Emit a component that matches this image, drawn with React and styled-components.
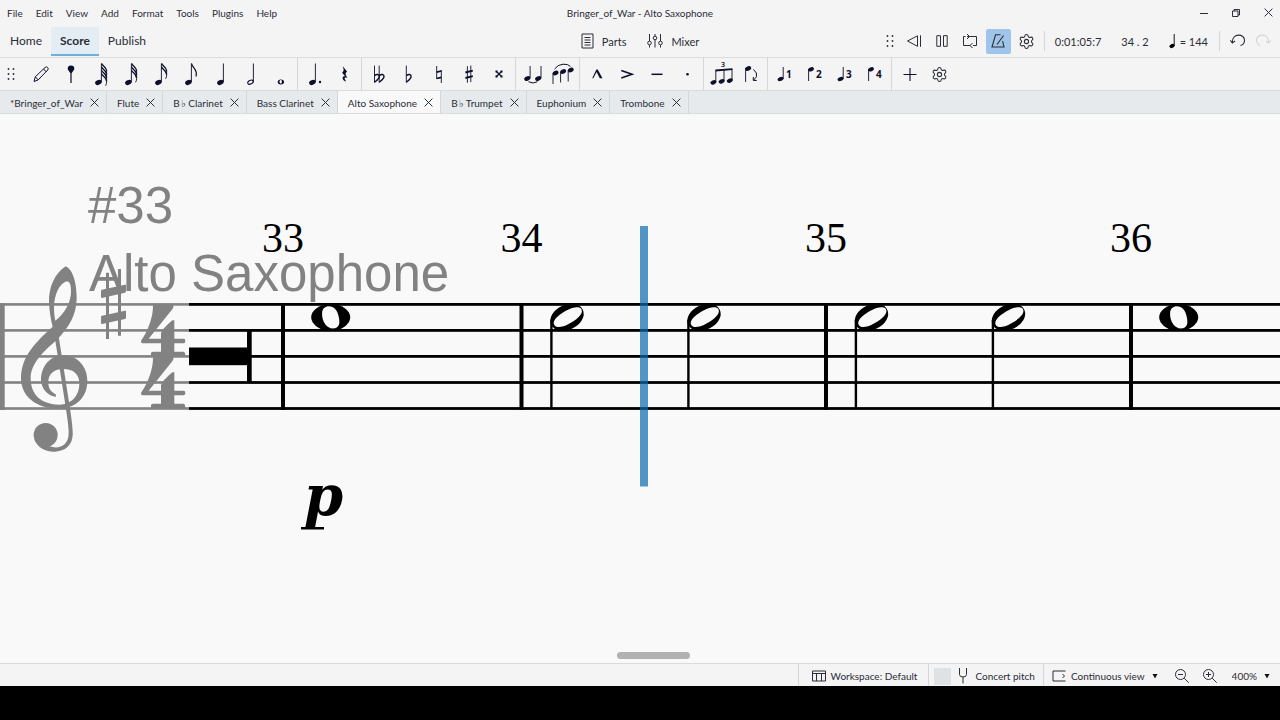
import React from 'react';
import styled, { createGlobalStyle } from 'styled-components';
import { Settings } from 'lucide-react';

const GlobalStyle = createGlobalStyle`
  * {
    box-sizing: border-box;
  }

  body {
    margin: 0;
    background: #000;
    color: #2b2d38;
    font-family: Lato, "Noto Sans", "DejaVu Sans", sans-serif;
    font-size: 10px;
  }

  button, select, input {
    margin: 0;
    padding: 0;
    border: none;
    background: none;
    color: inherit;
    font: inherit;
  }

  svg {
    display: block;
    flex-shrink: 0;
  }
`

const Window = styled.div`
  display: flex;
  flex-direction: column;
  min-height: 100vh;
  padding-bottom: 34px;
`

// ---------------- Title bar ----------------

const TitleBar = styled.header`
  display: grid;
  grid-template-columns: 1fr auto 1fr;
  align-items: center;
  height: 27px;
  padding-bottom: 2px;
  background: #f4f4f4;
`

const MenuBar = styled.nav`
  display: flex;
  gap: 1px;
  padding-left: 1px;
`

const MenuButton = styled.button`
  padding: 0 6px;
  line-height: 16px;
`

const Title = styled.div`
  line-height: 16px;
`

const WindowButtons = styled.div`
  display: flex;
  justify-content: flex-end;
  gap: 8px;
`

const WindowButton = styled.button`
  display: flex;
  align-items: center;
  justify-content: center;
  width: 24px;
  height: 24px;
`

// ---------------- Main toolbar ----------------

const MainToolbar = styled.div`
  display: grid;
  grid-template-columns: 1fr auto 1fr;
  height: 31px;
  background: #f4f4f4;
  border-bottom: 1px solid #d9dcdd;
`

const PageTabs = styled.nav`
  display: flex;
  height: 29px;
  padding-left: 1px;
`

const PageTab = styled.button`
  padding: 0 9px;
  font-size: 12px;
  font-weight: ${({ $active }) => ($active ? 700 : 400)};
  background: ${({ $active }) => ($active ? '#e4edf3' : 'transparent')};
  border-bottom: 2px solid ${({ $active }) => ($active ? '#70aedb' : 'transparent')};
`

const CenterTools = styled.div`
  display: flex;
  align-items: center;
  gap: 21px;
  height: 28px;
`

const LabelButton = styled.button`
  display: flex;
  align-items: center;
  gap: 8px;
  font-size: 11px;
`

const Playback = styled.div`
  display: flex;
  align-items: center;
  justify-content: flex-end;
  height: 28px;
  padding-right: 5px;
`

const PlayButtons = styled.div`
  display: flex;
  align-items: center;
  gap: 3px;
`

const IconButton = styled.button`
  display: flex;
  align-items: center;
  justify-content: center;
  width: 25px;
  height: 25px;
  border-radius: 2px;
  background: ${({ $on }) => ($on ? '#9fc6ea' : 'transparent')};
  opacity: ${({ disabled }) => (disabled ? 0.15 : 1)};
`

const PlaySeparator = styled.div`
  width: 1px;
  height: 20px;
  margin: 0 5px;
  background: #d4d7d8;
`

const Readout = styled.div`
  display: flex;
  align-items: center;
  gap: 20px;
  padding: 0 6px 0 5px;
  font-size: 11px;
`

const Tempo = styled.span`
  display: flex;
  align-items: center;
  gap: 4px;
`

// ---------------- Note input toolbar ----------------

const NoteToolbar = styled.div`
  display: flex;
  align-items: center;
  height: 33px;
  background: #f4f4f4;
  border-bottom: 1px solid #d9dcdd;
`

const GripButton = styled.button`
  display: flex;
  align-items: center;
  justify-content: center;
  width: ${({ $narrow }) => ($narrow ? '16px' : '22px')};
  margin-right: 4px;
`

const NoteGroup = styled.div`
  display: flex;
  height: 100%;

  & + & {
    padding-left: 2px;
    margin-left: 1px;
    border-left: 1px solid #d4d7d8;
  }
`

const NoteButton = styled.button`
  display: flex;
  align-items: center;
  justify-content: center;
  width: 30px;
  height: 32px;
`

// ---------------- Part tabs ----------------

const PartTabs = styled.div`
  display: flex;
  height: 23px;
  background: #e6eaec;
  border-bottom: 1px solid #d9dcdd;
`

const PartTab = styled.div`
  display: flex;
  align-items: center;
  gap: 7px;
  padding: 1px 7px 0 10px;
  border-right: 1px solid #d3d8da;
  background: ${({ $active }) => ($active ? '#f9f9f9' : 'transparent')};
`

// ---------------- Score ----------------

const Canvas = styled.main`
  display: flex;
  flex: 1;
  flex-direction: column;
  background: #f9f9f9;
`

const ScoreSvg = styled.svg`
  flex: 1;
  width: 100%;
  min-height: 530px;
`

const ScrollTrack = styled.div`
  height: 11px;
`

const ScrollThumb = styled.div`
  width: 73px;
  height: 7px;
  margin-left: 48.2%;
  border-radius: 4px;
  background: #b1b1b1;
`

// ---------------- Status bar ----------------

const StatusBar = styled.footer`
  display: flex;
  justify-content: flex-end;
  height: 23px;
  background: #f4f4f4;
  border-top: 1px solid #d9dcdd;
`

const StatusGroup = styled.div`
  display: flex;
  align-items: center;
  padding: 2px ${({ $right }) => $right || '8px'} 0 ${({ $left }) => $left || '8px'};
  border-left: 1px solid #d4d7d8;
`

const StatusButton = styled.button`
  display: flex;
  align-items: center;
  gap: 5px;
`

const StatusLabel = styled.label`
  display: flex;
  align-items: center;
  gap: 5px;
`

const CheckBox = styled.input`
  appearance: none;
  width: 17px;
  height: 17px;
  background: #dfe2e4;
`

const StatusSelect = styled.select`
  appearance: none;
  field-sizing: content;
`

const ZoomButtons = styled.div`
  display: flex;
  margin: 0 8px;
`

const ZoomButton = styled.button`
  display: flex;
  align-items: center;
  justify-content: center;
  width: 28px;
  height: 20px;
`

// ---------------- Icon drawings ----------------

const Line = ({ children, w = 16, h = 16, sw = 1 }) => (
  <svg width={w} height={h} viewBox={`0 0 ${w} ${h}`} fill="none" stroke="#2b2d38" strokeWidth={sw}>
    {children}
  </svg>
)

const Grip = () => (
  <svg width="8" height="14" viewBox="0 0 8 14" fill="#2b2d38">
    {[2, 7, 12].map((y) => (
      <g key={y}>
        <circle cx="1.5" cy={y} r=".9" />
        <circle cx="6.5" cy={y} r=".9" />
      </g>
    ))}
  </svg>
)

const CloseX = ({ size = 9 }) => (
  <Line w={size} h={size}>
    <path d={`M.6 .6L${size - 0.6} ${size - 0.6}M${size - 0.6} .6L.6 ${size - 0.6}`} />
  </Line>
)

const Arrow = () => (
  <svg width="10" height="6" viewBox="0 0 10 6">
    <path d="M2.5 1h5L5 5.6z" fill="#111" />
  </svg>
)

const Head = ({ x, y, rx = 3.4, ry = 2.4 }) => (
  <ellipse cx={x} cy={y} rx={rx} ry={ry} transform={`rotate(-24 ${x} ${y})`} stroke="none" />
)

const Stem = ({ x, y1, y2 }) => <path d={`M${x} ${y1}V${y2}`} fill="none" strokeWidth=".9" />

const Flagged = ({ flags }) => {
  const starts = Array.from({ length: flags }, (_, i) => 5.5 + i * 3.4)
  return (
    <>
      <Head x={12.4} y={24.4} />
      <Stem x={15.4} y1={5.5} y2={24} />
      {starts.map((y) => (
        <path
          key={y}
          fill="none"
          strokeWidth={flags > 1 ? 1.4 : 1.2}
          d={flags > 1 ? `M15.6 ${y}c.6 2.6 4.7 3 5 7.6` : `M15.6 ${y}c.6 4.6 6.6 6 4.4 13`}
        />
      ))}
      {flags > 1 && <path fill="none" strokeWidth=".9" d={`M20.6 ${starts[0] + 7}V${starts[flags - 1] + 8}q.2 2-1 4`} />}
    </>
  )
}

const Flat = ({ x }) => (
  <>
    <Stem x={x} y1={7.6} y2={24.6} />
    <path fill="none" strokeWidth="1.4" d={`M${x} 17.8c2.2-2 5-1.6 4.8.8c-.2 2.2-2.8 4-4.8 5.6`} />
  </>
)

const Voice = ({ down, n }) => (
  <>
    {down ? (
      <>
        <Head x={11} y={11.3} rx={3} ry={2} />
        <Stem x={8.6} y1={11} y2={23} />
      </>
    ) : (
      <>
        <Head x={10.5} y={21} rx={3} ry={2} />
        <Stem x={13.2} y1={9} y2={21} />
      </>
    )}
    <text x="16" y="20" fontSize="10" fontWeight="700" fontFamily="Noto Sans, sans-serif" stroke="none">{n}</text>
  </>
)

const Gear = () => <Settings size={17} strokeWidth={1.5} color="#2b2d38" />

const glyphs = {
  pencil: (
    <path fill="none" strokeWidth="1" d="M8 23.5l1.3-4.7L19.2 9.4q1.2-1 2.4.1t.1 2.5L12.2 21.9zM9.3 18.8l2.9 3.1M17.6 11l2.6 2.8" />
  ),
  pin: <path stroke="none" d="M15 7.5a3.3 3.3 0 0 1 3.3 3.3c0 1.5-1.7 2.5-2.7 4.5V25h-1.2v-9.7c-1-2-2.7-3-2.7-4.5A3.3 3.3 0 0 1 15 7.5z" />,
  n64: <Flagged flags={4} />,
  n32: <Flagged flags={3} />,
  n16: <Flagged flags={2} />,
  n8: <Flagged flags={1} />,
  n4: (
    <>
      <Head x={14.4} y={24.4} />
      <Stem x={17.4} y1={5.5} y2={24} />
    </>
  ),
  n2: (
    <>
      <ellipse cx="14.5" cy="24.2" rx="2.9" ry="1.8" transform="rotate(-26 14.5 24.2)" fill="none" strokeWidth="1.1" />
      <Stem x={17.4} y1={5.5} y2={24} />
    </>
  ),
  n1: (
    <path fillRule="evenodd" stroke="none" d="M11.7 24a3.2 2.5 0 0 1 6.4 0a3.2 2.5 0 0 1-6.4 0zM13.5 23.5c-.1 1.3 1 2.5 1.8 2c.9-.6.9-3-.4-3.4c-.8-.3-1.3.5-1.4 1.4z" />
  ),
  dotted: (
    <>
      <Head x={12.4} y={24.4} />
      <Stem x={15.4} y1={5.5} y2={24} />
      <circle cx="20" cy="24" r="1.2" stroke="none" />
    </>
  ),
  rest: (
    <path stroke="none" d="M13 8.6l4 5c-1.9 1.9-1.8 3.2.6 6.2c-2.2-.8-3.3-.2-2.9 1.2c.2.9.7 1.4 1.2 2.1l-.3.4c-2.1-1.2-3.4-2.6-2.9-4.1c.4-1 1.5-1.2 2.6-.9l-3.2-3.8c1.7-1.7 2.2-3 .7-5.7z" />
  ),
  dblflat: (
    <>
      <Flat x={10.5} />
      <Flat x={15.2} />
    </>
  ),
  flat: <Flat x={12.3} />,
  natural: (
    <>
      <path fill="none" strokeWidth=".9" d="M12.7 8v13M17.3 12v13" />
      <path fill="none" strokeWidth="1.8" d="M12.7 14.2l4.6-1.2M12.7 20.5l4.6-1.2" />
    </>
  ),
  sharp: (
    <>
      <path fill="none" strokeWidth=".9" d="M13.4 8.2v16.5M16.8 7.6v16.5" />
      <path fill="none" strokeWidth="1.9" d="M11.4 14.5l7.4-1.9M11.4 20l7.4-1.9" />
    </>
  ),
  dblsharp: (
    <>
      <path fill="none" strokeWidth="1.3" d="M12.2 13.2l5.6 5.6M17.8 13.2l-5.6 5.6" />
      <path stroke="none" d="M11.5 12.5h2v2h-2zM16.5 12.5h2v2h-2zM11.5 17.5h2v2h-2zM16.5 17.5h2v2h-2z" />
    </>
  ),
  tie: (
    <>
      <Head x={9.3} y={20.5} rx={3.2} ry={2.2} />
      <Stem x={12.1} y1={8} y2={20} />
      <Head x={20.2} y={20.5} rx={3.2} ry={2.2} />
      <Stem x={23} y1={8} y2={20} />
      <path fill="none" strokeWidth="1" d="M10.5 23.7q4.5 2.6 9 0" />
    </>
  ),
  slur: (
    <>
      <Head x={7.6} y={15} rx={3} ry={2.2} />
      <Stem x={5} y1={15} y2={26} />
      <Head x={15.2} y={13.5} rx={3} ry={2.2} />
      <Stem x={12.6} y1={13.5} y2={24.5} />
      <Head x={22.8} y={12} rx={3} ry={2.2} />
      <Stem x={20.2} y1={12} y2={23.5} />
      <path fill="none" strokeWidth="1" d="M6.5 11Q10 6.5 15 6.2Q20 5.8 22.5 8.5" />
    </>
  ),
  marcato: <path stroke="none" d="M14.4 11.5h1.3L20.5 20.3h-2.7l-3.2-6.2l-3.3 6.2h-1.1z" />,
  accent: <path fill="none" strokeWidth="1.6" d="M9.3 12.6l10.7 3.7L9.3 20" />,
  tenuto: <path fill="none" strokeWidth="1.5" d="M9.5 16.3h11" />,
  staccato: <circle cx="15.5" cy="16.3" r="1.3" stroke="none" />,
  triplet: (
    <>
      <Head x={7.4} y={24.3} rx={3.1} ry={2.1} />
      <Head x={15.6} y={23.3} rx={3.1} ry={2.1} />
      <Head x={23.8} y={22.6} rx={3.1} ry={2.1} />
      <path fill="none" strokeWidth=".9" d="M9.8 12.5V24M18 11.8V23M26 11V22" />
      <path stroke="none" d="M9.4 11.6l17-1.4v1.9l-17 1.4z" />
      <text x="15" y="9" fontSize="7" fontFamily="Noto Sans, sans-serif" fontWeight="600" stroke="none">3</text>
    </>
  ),
  flip: (
    <>
      <Head x={12.2} y={10.6} rx={3.1} ry={2.2} />
      <Stem x={9.6} y1={10} y2={24} />
      <path fill="none" strokeWidth="1" d="M17.5 11.5q4.2 3.5 3 7q-.8 2-3 3.5M20.8 22.4h-3.5v-3.4" />
    </>
  ),
  v1: <Voice n="1" />,
  v2: <Voice n="2" down />,
  v3: <Voice n="3" />,
  v4: <Voice n="4" down />,
  add: <path fill="none" strokeWidth="1.1" d="M9.5 16.5h13M16 10v13" />,
}

const noteGroups = [
  [
    ['pencil', 'Note input'],
    ['pin', 'Input by duration'],
    ['n64', '64th note'],
    ['n32', '32nd note'],
    ['n16', '16th note'],
    ['n8', 'Eighth note'],
    ['n4', 'Quarter note'],
    ['n2', 'Half note'],
    ['n1', 'Whole note'],
  ],
  [['dotted', 'Augmentation dot'], ['rest', 'Rest']],
  [
    ['dblflat', 'Double flat'],
    ['flat', 'Flat'],
    ['natural', 'Natural'],
    ['sharp', 'Sharp'],
    ['dblsharp', 'Double sharp'],
  ],
  [['tie', 'Tie'], ['slur', 'Slur']],
  [
    ['marcato', 'Marcato'],
    ['accent', 'Accent'],
    ['tenuto', 'Tenuto'],
    ['staccato', 'Staccato'],
  ],
  [['triplet', 'Tuplet'], ['flip', 'Flip direction']],
  [['v1', 'Voice 1'], ['v2', 'Voice 2'], ['v3', 'Voice 3'], ['v4', 'Voice 4']],
]

const NoteIcon = ({ name }) => (
  <svg width="30" height="32" viewBox="0 0 30 32" fill="#0d0f2b" stroke="#0d0f2b">
    {glyphs[name]}
  </svg>
)

// ---------------- Engraved symbols ----------------

const INK = '#000'
const GREY = '#828282'
const STAFF = [190.4, 216.4, 242.4, 268.5, 294.5]

const BarLine = ({ x }) => <rect x={x - 2} y="189" width="4" height="107" fill={INK} />

const MeasureNumber = ({ x, n }) => (
  <text x={x} y="138" fontSize="42" textAnchor="middle" fontFamily="Liberation Serif, serif" fill={INK}>{n}</text>
)

const WholeNote = ({ x }) => (
  <g transform={`translate(${x} 203.3)`}>
    <ellipse rx="19.5" ry="13.2" fill={INK} />
    <path d="M-8.6 -4C-8.3 -13 2 -12.5 5.5 -7C8 -3 9 3 8.6 6C7.5 13 -2 12.5 -5.5 7C-8 3 -8.8 0 -8.6 -4Z" fill="#f9f9f9" />
  </g>
)

const HalfNote = ({ x }) => (
  <g transform={`translate(${x} 203.3)`}>
    <ellipse rx="17.5" ry="12.4" fill={INK} transform="rotate(-25)" />
    <path d="M-12.5 8C-16 3 -6 -4 0 -7C6 -10.5 13 -11 14.5 -8C17 -3 8 3.5 2 6.5C-4 10 -11 11 -12.5 8Z" fill="#f9f9f9" />
    <path d="M-15.6 3V91.5" stroke={INK} strokeWidth="2.4" />
  </g>
)

const four = 'M459 404H518Q523 406 518 416L446 506H483V490Q485 478 517 451L523 451V506H551Q556 506 556 513Q556 520 551 520H523V545H551Q556 546 556 558H453V550Q453 545 459 545H483V520H427Q421 518 424 511C445 480 460 440 459 404Z'

// clef, key and time signature that stay pinned at the left edge
const PinnedHeader = () => (
  <g fill={GREY}>
    <rect x="0" y="189" width="4.7" height="107" />
    {STAFF.map((y) => (
      <rect key={y} x="0" y={y - 1.3} width="189" height="2.6" />
    ))}
    <g transform="translate(0 56) scale(.33333)">
      <path
        fillRule="evenodd"
        d="M195 290C165 310 146 350 147 395C148 425 153 450 158 470C110 515 64 555 63 625C63 680 110 716 175 716C225 716 262 685 262 632C262 590 232 556 190 556C150 556 123 590 123 630C123 655 145 680 168 680L168 674C150 662 145 655 145 635C145 610 165 597 190 597C220 597 238 612 238 640C238 680 212 704 178 704C125 704 92 675 92 625C92 580 130 545 170 510C205 475 230 435 230 385C230 345 222 310 205 294Q200 288 195 290ZM200 334C178 340 163 375 162 410C162 430 164 440 166 452C195 430 213 395 213 365C213 345 210 334 200 334Z"
      />
      <path fill="none" stroke={GREY} strokeWidth="12" d="M167 480L203 710C208 745 213 770 212 795" />
      <circle cx="137" cy="795" r="36" />
      <path d="M103 808C112 835 140 846 165 845C200 843 218 822 218 792L206 792C205 820 187 834 162 832L145 828Z" />
      <path d="M318 308h9v199h-9zM354 297h9v200h-9z" />
      <path d="M306 359L375 344Q378 343 378 347V364Q378 367 375 368L306 384Q303 384 303 380V363Q303 360 306 359ZM306 437L375 422Q378 421 378 425V443Q378 446 375 447L306 462Q303 462 303 459V441Q303 438 306 437Z" />
      <path d={four} />
      <path d={four} transform="translate(0 156)" />
    </g>
    <text x="88" y="109" fontSize="51" fontFamily="Liberation Sans, sans-serif">#33</text>
    <text x="89" y="177" fontSize="51" fontFamily="Liberation Sans, sans-serif">Alto Saxophone</text>
  </g>
)

const Score = () => (
  <ScoreSvg role="img" aria-label="Alto Saxophone part">
    {STAFF.map((y) => (
      <rect key={y} x="189" y={y - 1.4} width="100%" height="2.8" fill={INK} />
    ))}
    <rect x="189" y="233.5" width="60" height="17.7" fill={INK} />
    <rect x="247" y="217" width="4.7" height="51" fill={INK} />
    {[283, 521.5, 826, 1131].map((x, i) => (
      <g key={x}>
        <BarLine x={x} />
        <MeasureNumber x={x} n={33 + i} />
      </g>
    ))}
    <WholeNote x={330.7} />
    <WholeNote x={1178.7} />
    {[567, 704, 871.5, 1008.5].map((x) => (
      <HalfNote key={x} x={x} />
    ))}
    <text x="304" y="401" fontSize="56" fontWeight="700" fontStyle="italic" fontFamily="DejaVu Serif, serif">p</text>
    <rect x="301" y="413" width="23" height="2.5" fill={INK} />
    <PinnedHeader />
    <rect x="640" y="112" width="8" height="260.5" fill="#096bb0" opacity=".7" />
  </ScoreSvg>
)

const menus = ['File', 'Edit', 'View', 'Add', 'Format', 'Tools', 'Plugins', 'Help']
const pages = ['Home', 'Score', 'Publish']
const parts = ['*Bringer_of_War', 'Flute', 'B\u2009♭ Clarinet', 'Bass Clarinet', 'Alto Saxophone', 'B\u2009♭ Trumpet', 'Euphonium', 'Trombone']

const App = () => {
  return (
    <>
      <GlobalStyle />
      <Window>
        <TitleBar>
          <MenuBar>
            {menus.map((m) => <MenuButton key={m}>{m}</MenuButton>)}
          </MenuBar>
          <Title>Bringer_of_War - Alto Saxophone</Title>
          <WindowButtons>
            <WindowButton aria-label="Minimize">
              <Line w={10} h={10}><path d="M1 5.5h8" /></Line>
            </WindowButton>
            <WindowButton aria-label="Restore">
              <Line w={10} h={10}><path d="M1.5 3h5.5v5.5H1.5zM3 3V1.5h5.5V7H7" /></Line>
            </WindowButton>
            <WindowButton aria-label="Close"><CloseX /></WindowButton>
          </WindowButtons>
        </TitleBar>

        <MainToolbar>
          <PageTabs>
            {pages.map((p) => <PageTab key={p} $active={p === 'Score'}>{p}</PageTab>)}
          </PageTabs>
          <CenterTools>
            <LabelButton>
              <Line w={13} h={16}>
                <path d="M1 1h11v14H1zM3.5 4.5h6M3.5 7h6M3.5 9.5h6M3.5 12h6" />
              </Line>
              Parts
            </LabelButton>
            <LabelButton>
              <Line w={16} h={16}>
                <path d="M2.5 1v7M2.5 12v2.5M8 1v2M8 7v7.5M13.5 1v7M13.5 12v2.5" />
                <circle cx="2.5" cy="10" r="1.8" />
                <circle cx="8" cy="5" r="1.8" />
                <circle cx="13.5" cy="10" r="1.8" />
              </Line>
              Mixer
            </LabelButton>
          </CenterTools>
          <Playback>
            <GripButton $narrow aria-label="Move toolbar"><Grip /></GripButton>
            <PlayButtons>
              <IconButton aria-label="Rewind">
                <Line><path d="M11.5 2.8v10.5L1.5 8zM14.5 2.3v11.5" /></Line>
              </IconButton>
              <IconButton aria-label="Pause">
                <Line><path d="M2.8 2.7h3.7v10.6H2.8zM9.5 2.7h3.7v10.6H9.5z" /></Line>
              </IconButton>
              <IconButton aria-label="Loop playback">
                <Line><path d="M1.5 3.5v9h7M5 3.5h9.5v9h-3.5M3.5 3.5h-2M10.5 10L8 12.5l2.5 2.5M5 1l2.5 2.5L5 6" /></Line>
              </IconButton>
              <IconButton $on aria-label="Metronome">
                <Line sw={1.1}><path d="M10.5 1.8H5.5L2 14h12L12.6 8M7 11.5L13.6 2.5" /></Line>
              </IconButton>
              <IconButton aria-label="Playback settings"><Gear /></IconButton>
            </PlayButtons>
            <PlaySeparator />
            <Readout>
              <span>0:01:05:7</span>
              <span>34 . 2</span>
              <Tempo>
                <svg width="7" height="16" viewBox="0 0 7 16" fill="#000" stroke="#000">
                  <Head x={3} y={13} rx={2.6} ry={2} />
                  <Stem x={5.2} y1={1} y2={13} />
                </svg>
                = 144
              </Tempo>
            </Readout>
            <PlaySeparator />
            <IconButton aria-label="Undo">
              <Line sw={1.1}><path d="M2.3 9.5C2.3 -.5 14.8 .5 14.5 7.5Q14.3 11.5 10.5 12.5M.3 7.3l2 2.7L5 8" /></Line>
            </IconButton>
            <IconButton disabled aria-label="Redo">
              <Line sw={1.1}><path d="M13.7 9.5C13.7 -.5 1.2 .5 1.5 7.5Q1.7 11.5 5.5 12.5M15.7 7.3l-2 2.7L11 8" /></Line>
            </IconButton>
          </Playback>
        </MainToolbar>

        <NoteToolbar>
          <GripButton aria-label="Move toolbar"><Grip /></GripButton>
          {noteGroups.map((group) => (
            <NoteGroup key={group[0][0]}>
              {group.map(([name, label]) => (
                <NoteButton key={name} aria-label={label}><NoteIcon name={name} /></NoteButton>
              ))}
            </NoteGroup>
          ))}
          <NoteGroup>
            <NoteButton aria-label="Add"><NoteIcon name="add" /></NoteButton>
            <NoteButton aria-label="Customize toolbar"><Gear /></NoteButton>
          </NoteGroup>
        </NoteToolbar>

        <PartTabs>
          {parts.map((p) => (
            <PartTab key={p} $active={p === 'Alto Saxophone'}>
              <button>{p}</button>
              <button aria-label={`Close ${p}`}><CloseX /></button>
            </PartTab>
          ))}
        </PartTabs>

        <Canvas>
          <Score />
          <ScrollTrack><ScrollThumb /></ScrollTrack>
        </Canvas>

        <StatusBar>
          <StatusGroup $left="13px" $right="11px">
            <StatusButton>
              <Line w={14} h={12}>
                <path d="M.5 1h13v10H.5zM.5 3.5h13M4.5 3.5V11M9.5 3.5V11" />
              </Line>
              Workspace: Default
            </StatusButton>
          </StatusGroup>
          <StatusGroup $left="5px">
            <StatusLabel>
              <CheckBox type="checkbox" />
              <Line w={14} h={16}>
                <path d="M3.5 0v6.5q0 2.5 3.5 2.5t3.5-2.5V0M7 9v6.5" />
              </Line>
              Concert pitch
            </StatusLabel>
          </StatusGroup>
          <StatusGroup>
            <StatusLabel>
              <Line w={14} h={12}>
                <path d="M13.5 1H1v10h12.5M10.5 4l2 2l-2 2" />
              </Line>
              <StatusSelect aria-label="View mode">
                <option>Continuous view</option>
              </StatusSelect>
              <Arrow />
            </StatusLabel>
            <ZoomButtons>
              <ZoomButton aria-label="Zoom out">
                <Line><circle cx="6.5" cy="6.5" r="5" /><path d="M10.2 10.2l4.5 4.5M4 6.5h5" /></Line>
              </ZoomButton>
              <ZoomButton aria-label="Zoom in">
                <Line><circle cx="6.5" cy="6.5" r="5" /><path d="M10.2 10.2l4.5 4.5M4 6.5h5M6.5 4v5" /></Line>
              </ZoomButton>
            </ZoomButtons>
            <StatusLabel>
              <StatusSelect aria-label="Zoom">
                <option>400%</option>
              </StatusSelect>
              <Arrow />
            </StatusLabel>
          </StatusGroup>
        </StatusBar>
      </Window>
    </>
  );
};

export default App;
